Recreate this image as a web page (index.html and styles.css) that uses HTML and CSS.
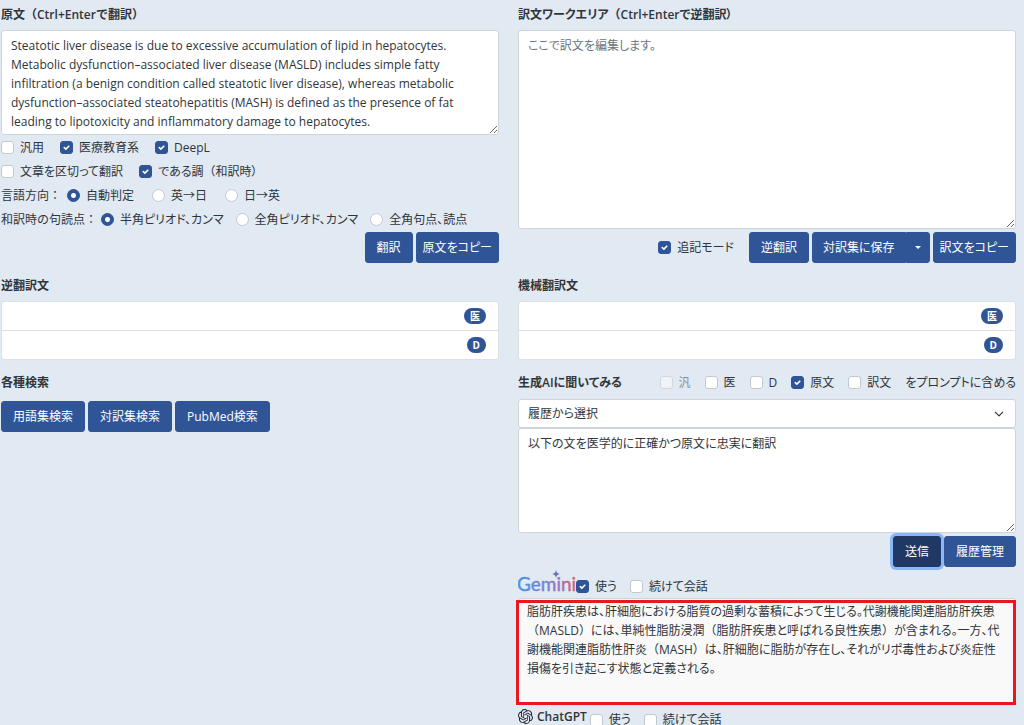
FILE: index.html
```html
<!DOCTYPE html>
<html lang="ja">
<head>
    <meta charset="UTF-8">
    <meta name="viewport" content="width=device-width, initial-scale=1.0">
    <title>翻訳ワークエリア</title>
    <link rel="stylesheet" href="styles.css">
</head>
<body>
    <main class="container">
        <!-- 原文 -->
        <section class="panel">
            <label class="title wide" for="source">原文（Ctrl+Enterで翻訳）</label>
            <textarea id="source" class="form-control source" spellcheck="false">Steatotic liver disease is due to excessive accumulation of lipid in hepatocytes.
Metabolic dysfunction–associated liver disease (MASLD) includes simple fatty
infiltration (a benign condition called steatotic liver disease), whereas metabolic
dysfunction–associated steatohepatitis (MASH) is defined as the presence of fat
leading to lipotoxicity and inflammatory damage to hepatocytes.</textarea>
            <div class="checks">
                <label class="check"><input type="checkbox">汎用</label>
                <label class="check"><input type="checkbox" checked>医療教育系</label>
                <label class="check"><input type="checkbox" checked>DeepL</label>
            </div>
            <div class="checks">
                <label class="check"><input type="checkbox">文章を区切って翻訳</label>
                <label class="check"><input type="checkbox" checked><span>である調<span class="wide">（</span>和訳時）</span></label>
            </div>
            <div class="checks direction">
                <span class="lead wide">言語方向：</span>
                <label class="check"><input type="radio" name="dir" checked>自動判定</label>
                <label class="check"><input type="radio" name="dir">英→日</label>
                <label class="check"><input type="radio" name="dir">日→英</label>
            </div>
            <div class="checks punct">
                <span class="lead wide">和訳時の句読点：</span>
                <label class="check"><input type="radio" name="punct" checked>半角ピリオド、カンマ</label>
                <label class="check"><input type="radio" name="punct">全角ピリオド、カンマ</label>
                <label class="check"><input type="radio" name="punct">全角句点、読点</label>
            </div>
            <div class="buttons right">
                <button type="button" class="btn">翻訳</button>
                <button type="button" class="btn copy">原文をコピー</button>
            </div>
        </section>

        <!-- 訳文 -->
        <section class="panel">
            <label class="title" for="work">訳文ワークエリア<span class="wide">（</span>Ctrl+Enterで逆翻訳）</label>
            <textarea id="work" class="form-control work" placeholder="ここで訳文を編集します。"></textarea>
            <div class="buttons right">
                <label class="check append"><input type="checkbox" checked>追記モード</label>
                <button type="button" class="btn">逆翻訳</button>
                <div class="btn-group">
                    <button type="button" class="btn">対訳集に保存</button>
                    <button type="button" class="btn toggle" aria-label="保存先"></button>
                </div>
                <button type="button" class="btn copy">訳文をコピー</button>
            </div>
        </section>

        <section class="panel results">
            <h2 class="title">逆翻訳文</h2>
            <ul class="list">
                <li><span class="badge">医</span></li>
                <li><span class="badge">D</span></li>
            </ul>
        </section>

        <section class="panel results">
            <h2 class="title">機械翻訳文</h2>
            <ul class="list">
                <li><span class="badge">医</span></li>
                <li><span class="badge">D</span></li>
            </ul>
        </section>

        <section class="panel">
            <h2 class="title search-title">各種検索</h2>
            <div class="buttons">
                <button type="button" class="btn">用語集検索</button>
                <button type="button" class="btn">対訳集検索</button>
                <button type="button" class="btn">PubMed検索</button>
            </div>
        </section>

        <!-- 生成AI -->
        <section class="panel">
            <div class="ai-head">
                <h2 class="title">生成AIに聞いてみる</h2>
                <div class="checks">
                    <label class="check disabled"><input type="checkbox" disabled>汎</label>
                    <label class="check"><input type="checkbox">医</label>
                    <label class="check"><input type="checkbox">D</label>
                    <label class="check"><input type="checkbox" checked>原文</label>
                    <label class="check"><input type="checkbox">訳文</label>
                    <span>をプロンプトに含める</span>
                </div>
            </div>
            <select class="form-control history" aria-label="履歴">
                <option>履歴から選択</option>
            </select>
            <textarea class="form-control prompt" aria-label="プロンプト">以下の文を医学的に正確かつ原文に忠実に翻訳</textarea>
            <div class="buttons right">
                <button type="button" class="btn active">送信</button>
                <button type="button" class="btn">履歴管理</button>
            </div>

            <div class="checks engine">
                <svg class="gemini" width="58" height="26" viewBox="0 0 58 26" role="img" aria-label="Gemini">
                    <defs>
                        <linearGradient id="g" gradientUnits="userSpaceOnUse" x1="0" y1="0" x2="56" y2="0">
                            <stop offset="0" stop-color="#4893e8"/>
                            <stop offset="0.5" stop-color="#7f7fcc"/>
                            <stop offset="0.75" stop-color="#9a72bd"/>
                            <stop offset="1" stop-color="#cb6479"/>
                        </linearGradient>
                    </defs>
                    <text x="-1" y="21" fill="url(#g)" stroke="url(#g)" stroke-width="0.400">Gemini</text>
                    <path d="M38 0c.6 2.600 1.400 3.400 4 4-2.600.6-3.400 1.400-4 4-.6-2.600-1.400-3.400-4-4 2.600-.6 3.400-1.400 4-4z" fill="#6b6fc4"/>
                </svg>
                <label class="check"><input type="checkbox" checked>使う</label>
                <label class="check"><input type="checkbox">続けて会話</label>
            </div>
            <div class="output">
                脂肪肝疾患は、肝細胞における脂質の過剰な蓄積によって生じる。代謝機能関連脂肪肝疾患<br><span class="wide">（</span>MASLD<span class="wide">）</span>には、単純性脂肪浸潤<span class="wide">（</span>脂肪肝疾患と呼ばれる良性疾患<span class="wide">）</span>が含まれる。一方、代<br>謝機能関連脂肪性肝炎<span class="wide">（</span>MASH<span class="wide">）</span>は、肝細胞に脂肪が存在し、それがリポ毒性および炎症性<br>損傷を引き起こす状態と定義される。
            </div>
            <div class="checks engine last">
                <span class="chatgpt">
                    <svg width="15" height="15" viewBox="0 0 24 24" fill="#1f2328" aria-hidden="true">
                        <path d="M22.2819 9.8211a5.9847 5.9847 0 0 0-.5157-4.9108 6.0462 6.0462 0 0 0-6.5098-2.9A6.0651 6.0651 0 0 0 4.9807 4.1818a5.9847 5.9847 0 0 0-3.9977 2.9 6.0462 6.0462 0 0 0 .7427 7.0966 5.98 5.98 0 0 0 .511 4.9107 6.051 6.051 0 0 0 6.5146 2.9001A5.9847 5.9847 0 0 0 13.2599 24a6.0557 6.0557 0 0 0 5.7718-4.2058 5.9894 5.9894 0 0 0 3.9977-2.9001 6.0557 6.0557 0 0 0-.7475-7.0729zm-9.022 12.6081a4.4755 4.4755 0 0 1-2.8764-1.0408l.1419-.0804 4.7783-2.7582a.7948.7948 0 0 0 .3927-.6813v-6.7369l2.02 1.1686a.071.071 0 0 1 .038.052v5.5826a4.504 4.504 0 0 1-4.4945 4.4944zm-9.6607-4.1254a4.4708 4.4708 0 0 1-.5346-3.0137l.142.0852 4.783 2.7582a.7712.7712 0 0 0 .7806 0l5.8428-3.3685v2.3324a.0804.0804 0 0 1-.0332.0615L9.74 19.9502a4.4992 4.4992 0 0 1-6.1408-1.6464zM2.3408 7.8956a4.485 4.485 0 0 1 2.3655-1.9728V11.6a.7664.7664 0 0 0 .3879.6765l5.8144 3.3543-2.0201 1.1685a.0757.0757 0 0 1-.071 0l-4.8303-2.7865A4.504 4.504 0 0 1 2.3408 7.872zm16.5963 3.8558L13.1038 8.364 15.1192 7.2a.0757.0757 0 0 1 .071 0l4.8303 2.7913a4.4944 4.4944 0 0 1-.6765 8.1042v-5.6772a.79.79 0 0 0-.407-.667zm2.0107-3.0231l-.142-.0852-4.7735-2.7818a.7759.7759 0 0 0-.7854 0L9.409 9.2297V6.8974a.0662.0662 0 0 1 .0284-.0615l4.8303-2.7866a4.4992 4.4992 0 0 1 6.6802 4.66zM8.3065 12.863l-2.02-1.1638a.0804.0804 0 0 1-.038-.0567V6.0742a4.4992 4.4992 0 0 1 7.3757-3.4537l-.142.0805L8.704 5.459a.7948.7948 0 0 0-.3927.6813zm1.0976-2.3654l2.602-1.4998 2.6069 1.4998v2.9994l-2.5974 1.4997-2.6067-1.4997Z"/>
                    </svg>
                    ChatGPT
                </span>
                <label class="check"><input type="checkbox">使う</label>
                <label class="check"><input type="checkbox">続けて会話</label>
            </div>
        </section>
    </main>
</body>
</html>
```
FILE: styles.css
```css
* {
    margin: 0;
    padding: 0;
    box-sizing: border-box;
}

body {
    font-family: "Open Sans", "Noto Sans CJK JP", sans-serif;
    font-size: 12px;
    line-height: 19px;
    font-feature-settings: "palt";
    color: #30353a;
    background: #e1e9f2;
    overflow: hidden;
}

.container {
    display: grid;
    grid-template-columns: 1fr 1fr;
    column-gap: 19px;
    padding: 0 8px 0 1px;
}

.panel {
    display: flex;
    flex-direction: column;
    min-width: 0;
}

.title {
    height: 30px;
    padding-top: 5px;
    font-size: 12px;
    font-weight: 600;
    white-space: nowrap;
}

/* 全角幅のまま表示する約物 */
.wide {
    font-feature-settings: normal;
}

button,
select,
textarea {
    font: inherit;
    font-feature-settings: inherit;
    color: inherit;
}

.form-control {
    display: block;
    width: 100%;
    padding: 5px 9px;
    background: #fff;
    border: 1px solid #ced4da;
    border-radius: 3px;
    outline: none;
    resize: vertical;
}

.form-control::placeholder {
    color: #6c757d;
}

.source {
    height: 105px;
    overflow: hidden;
}

.work {
    height: 199px;
}

.checks {
    display: flex;
    align-items: center;
    gap: 16px;
    height: 24px;
    white-space: nowrap;
}

.direction {
    gap: 18px;
}

.punct {
    gap: 12px;
}

.check {
    display: flex;
    align-items: center;
    gap: 6px;
}

.lead {
    margin-right: -12px;
}

.punct .lead {
    margin-right: -8px;
}

.check input {
    appearance: none;
    width: 13px;
    height: 13px;
    background: #fff center / 13px 13px no-repeat;
    border: 1px solid #c3c8ce;
    border-radius: 3px;
}

.check input[type="radio"] {
    border-radius: 50%;
}

.check input:checked {
    background-color: #2f5597;
    background-image: url("data:image/svg+xml,%3Csvg xmlns='http://www.w3.org/2000/svg' viewBox='0 0 20 20'%3E%3Cpath fill='none' stroke='%23fff' stroke-linecap='round' stroke-linejoin='round' stroke-width='2.500' d='M6.500 10l2.500 2.500 4.500-4.500'/%3E%3C/svg%3E");
    border-color: #2f5597;
}

.check input[type="radio"]:checked {
    background-image: radial-gradient(circle, #fff 2px, transparent 3px);
}

.disabled {
    opacity: 0.5;
}

.buttons {
    display: flex;
    align-items: center;
    gap: 3px;
    margin-top: 3px;
}

.right {
    justify-content: flex-end;
}

.source ~ .right {
    margin-top: 1px;
}

.append {
    margin-right: 12px;
}

.btn {
    height: 31px;
    padding: 0 11px;
    color: #fff;
    background: #2f5597;
    border: 1px solid #2f5597;
    border-radius: 3px;
    white-space: nowrap;
    cursor: pointer;
}

.copy {
    padding: 0 6px;
}

.btn:hover,
.active {
    background: #1f3864;
    border-color: #1f3864;
}

.active {
    box-shadow: 0 0 0 3px #8bb6f9;
}

.btn-group {
    display: flex;
}

.btn-group .btn:first-child {
    padding: 0 10px;
    border-radius: 3px 0 0 3px;
}

.btn-group .toggle {
    padding: 0 8px;
    border-radius: 0 3px 3px 0;
}

.toggle::after {
    content: "";
    display: block;
    border: 3px solid transparent;
    border-top-color: #fff;
    border-bottom: 0;
}

.results {
    padding-top: 8px;
}

.list {
    list-style: none;
    background: #fff;
    border: 1px solid #dcdfe3;
    border-radius: 3px;
}

.list li {
    display: flex;
    align-items: center;
    justify-content: flex-end;
    box-sizing: content-box;
    height: 28px;
    padding-right: 12px;
}

.list li + li {
    border-top: 1px solid #dcdfe3;
}

.badge {
    padding: 0 6px;
    color: #fff;
    background: #2f5597;
    border-radius: 8px;
    font-size: 10px;
    font-weight: 700;
    line-height: 16px;
}

.search-title {
    height: 38px;
    padding-top: 13px;
}

.ai-head {
    display: flex;
    align-items: center;
    justify-content: space-between;
    height: 39px;
    padding-top: 6px;
}

.ai-head .title {
    height: 19px;
    padding: 0;
}

.ai-head .checks {
    gap: 14px;
}

.history {
    height: 29px;
    padding: 0 9px;
    appearance: none;
    background: #fff url("data:image/svg+xml,%3Csvg xmlns='http://www.w3.org/2000/svg' viewBox='0 0 16 16'%3E%3Cpath fill='none' stroke='%23343a40' stroke-linecap='round' stroke-linejoin='round' stroke-width='2' d='m2 5 6 6 6-6'/%3E%3C/svg%3E") right 11px center / 10px 10px no-repeat;
}

.prompt {
    height: 105px;
}

.engine {
    gap: 13px;
    height: 31px;
}

.engine .check {
    padding-top: 8px;
    line-height: 12px;
}

.gemini {
    margin-right: -13px;
}

.gemini text {
    font-family: Lato, sans-serif;
    font-size: 19px;
}

.output {
    position: relative;
    height: 106px;
    padding: 3px 8px;
    background: #f9f9f9;
    border: 1px solid #ced4da;
    border-radius: 3px;
    white-space: nowrap;
}

/* 赤枠の強調 */
.output::after {
    content: "";
    position: absolute;
    inset: 1px -1px -2px -3px;
    border: 3px solid #e8191c;
}

.last {
    height: 24px;
}

.chatgpt {
    display: flex;
    align-items: center;
    gap: 4px;
    margin-right: -10px;
    font-weight: 600;
}
```
